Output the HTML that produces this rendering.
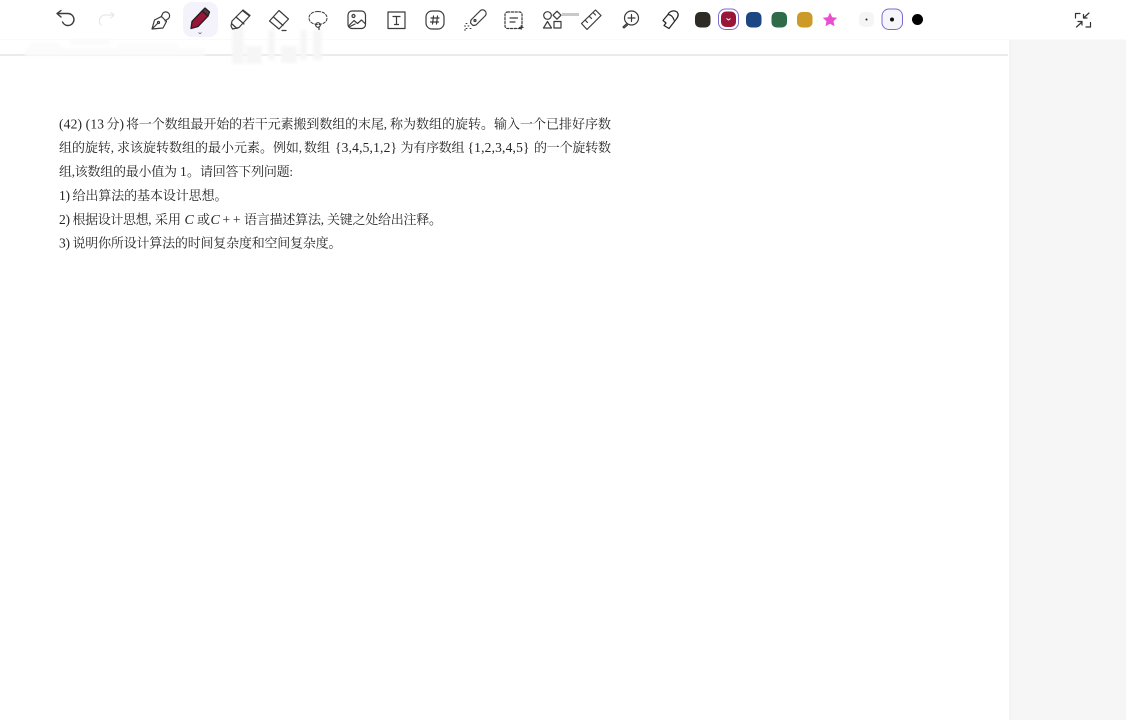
<!DOCTYPE html>
<html lang="zh"><head><meta charset="utf-8"><title>Notes</title>
<style>
html,body{margin:0;padding:0;width:1126px;height:720px;overflow:hidden;background:#fff}
svg{position:absolute;left:0;top:0;display:block}
.l{font-family:'Liberation Serif',serif;font-size:13.5px}
.i{font-family:'Liberation Serif',serif;font-size:14px;font-style:italic}
</style></head><body>
<svg width="1126" height="720" viewBox="0 0 1126 720" xmlns="http://www.w3.org/2000/svg">
<defs>
<filter id="b" x="-5%" y="-5%" width="110%" height="110%"><feGaussianBlur stdDeviation="0.35"/></filter>
<filter id="b2" x="-20%" y="-20%" width="140%" height="140%"><feGaussianBlur stdDeviation="1.5"/></filter>
</defs>
<rect width="1126" height="720" fill="#fff"/>
<rect x="1009" y="40" width="117" height="680" fill="#f6f6f6"/>
<rect x="1009" y="40" width="3" height="680" fill="#f4f4f4"/>
<rect x="0" y="39" width="1126" height="1" fill="#fafafa"/>
<rect x="0" y="54" width="1008" height="2" fill="#ebebeb"/>
<g filter="url(#b2)">
<path d="M25 48h180v8H25z" fill="#fbfbfb"/>
<path d="M30 43h30v4H30zM70 40h40v5H70zM118 44h60v3h-60z" fill="#fafafa"/>
<path d="M232 26h12v38h-12zM246 46h16v18h-16zM268 30h7v30h-7zM281 46h16v17h-16zM300 30h7v30h-7zM313 30h9v30h-9z" fill="#f6f6f6"/>
</g>
<rect x="183" y="2" width="35" height="35" rx="9" fill="#f4f2fb"/>
<g fill="none" stroke="#3a3a3a" stroke-width="1.200" stroke-linecap="round" stroke-linejoin="round" filter="url(#b)">
<path d="M57 13.500l4-3M57 13.500l4 3.500M57 13.500h11a6 6 0 1 1-5.500 8.500" stroke-width="1.400"/>
<path d="M101 25a6 6 0 0 1 5-10h8M114 15l-3-2.500M114 15l-3 3" stroke="#e8e8e8"/>
<path d="M152 29l2.500-9 7-3.500 5 5-3.500 6.500zM152 29l5.500-5.500"/>
<circle cx="158.500" cy="22.500" r="1"/>
<path d="M161 17l2-4a3.800 3.800 0 0 1 5.500 5.500l-3.500 2.500"/>
<path d="M232 21l11-11 7 5.500-11 12-6.500 1.500-1.500-3z"/>
<path d="M236 17l8 7M232 24l5 4.500M243 11l6.500 5"/>
<path d="M269.500 21l9.500-10.500 9.500 8.500-9.500 10zM273.500 17l9.500 8.500M282 30.500h4"/>
<path d="M318 11.500c5 0 9 2.500 9 6.500s-4 6.500-9 6.500-9-2.500-9-6.500 4-6.500 9-6.500z" stroke-dasharray="2.600 1.600" stroke-width="1"/>
<circle cx="318" cy="25" r="2.300"/><path d="M319 27v2.500"/>
<rect x="348" y="11" width="17.500" height="17.500" rx="4"/>
<circle cx="353.500" cy="16" r="1.500"/><path d="M349 25.500l5-5 3.500 3 4-3.500 3.500 3.500M349 27l6-3"/>
<path d="M388 12h17v16.500h-17zM393 16.500h7M396.500 16.500v8M394.500 24.500h4"/>
<rect x="426" y="11" width="18" height="18" rx="6"/>
<path d="M433.500 16l-1 8M437.500 16l-1 8M431 18h8M430.500 22h8"/>
<path d="M471 20l9.500-9.500a3.600 3.600 0 0 1 5 5L476 25l-3 .5-2.500-2.500z"/>
<circle cx="475" cy="20.500" r="1"/>
<path d="M466 23.500h1M464.500 26h1M468 26h1M466 28.500h1M470 28.500h1M464.500 30h1" stroke-width="1"/>
<rect x="505" y="12" width="17" height="16.500" rx="2.500" stroke-dasharray="2.200 1.600"/>
<path d="M510 18h7.500M510 22h5M519.500 27.500h3.500M521.200 25.800v3.400"/>
<circle cx="547.500" cy="15.500" r="3.800"/><path d="M557 11.200l4 4-4 4-4-4zM543.500 28l4-6.500 4 6.500zM554 21.500h7v6.500h-7z"/>
<path d="M562 14.500h17" stroke="#c9c9c9" stroke-width="3" stroke-linecap="butt"/>
<path d="M581.500 23.500l14-13.500 5.500 5.500-14 14zM585.500 20.500l2 2M589.500 16.500l2 2M593.500 13l2 2"/>
<circle cx="631.500" cy="18" r="7"/><path d="M627 23.500l-4 3.500.9 1 3.600-3M631.500 14.500v7M628 18h7"/>
<path d="M668 14.500c1-3 6-5 9-2.500 2 2 1 5-1 7.500l-7 9-5-3 2-2.500-3-2.500zM668 14.500c2.500 0 5 2 6 5.500" stroke="#222"/>
</g>
<g filter="url(#b)">
<rect x="695" y="12" width="15.500" height="15.500" rx="5" fill="#2f2a27"/>
<rect x="718.500" y="9" width="20" height="20.500" rx="7" fill="#fff" stroke="#7b6bd3" stroke-width="1"/>
<rect x="721" y="11.500" width="15" height="15.500" rx="5" fill="#9a1237"/>
<path d="M726.500 18.500l2 1.500 2-1.500" fill="none" stroke="#fff" stroke-width="1"/>
<rect x="746" y="12" width="15.500" height="15.500" rx="5" fill="#1f4682"/>
<rect x="771.500" y="12" width="15.500" height="15.500" rx="5" fill="#2f6c49"/>
<rect x="797" y="12" width="15.500" height="15.500" rx="5" fill="#cc9a28"/>
<path d="M830 12.500l2.200 4.700 5 .6-3.700 3.400 1 5-4.500-2.500-4.500 2.500 1-5-3.700-3.400 5-.6z" fill="#ea4ed2"/>
<rect x="859" y="12" width="15" height="15" rx="5" fill="#f5f5f5"/>
<circle cx="866.500" cy="19.500" r="1" fill="#222"/>
<rect x="882" y="9" width="20.500" height="20.500" rx="7" fill="#f6f6fa" stroke="#7b6bd3" stroke-width="1"/>
<circle cx="892" cy="19.500" r="2" fill="#111"/>
<circle cx="917.500" cy="19.500" r="5.500" fill="#000"/>
</g>
<g fill="none" stroke="#333" stroke-width="1.200" stroke-linecap="round" stroke-linejoin="round" filter="url(#b)">
<path d="M1075.500 18v-4.500h4.500M1090.500 22.500v4.500h-4.500M1089 13l-5.500 5M1083.500 14.500v3.500h3.500M1076.500 27l5.500-5M1078 21.500h4v3.500"/>
</g>
<g font-family="'Liberation Serif','Noto Serif CJK SC',serif" font-size="13" fill="#262626" filter="url(#b)">
<text class="l" x="59" y="128.500" textLength="45" lengthAdjust="spacing">(42) (13</text>
<text x="106.500" y="128.500">分</text>
<text class="l" x="119.500" y="128.500">)</text>
<text x="126" y="128.500" textLength="261" lengthAdjust="spacing">将一个数组最开始的若干元素搬到数组的末尾,</text>
<text x="390" y="128.500" textLength="221" lengthAdjust="spacing">称为数组的旋转。输入一个已排好序数</text>

<text x="59" y="152" textLength="55" lengthAdjust="spacing">组的旋转,</text>
<text x="117" y="152" textLength="156" lengthAdjust="spacing">求该旋转数组的最小元素。</text>
<text x="273" y="152" textLength="29" lengthAdjust="spacing">例如,</text>
<text x="304" y="152" textLength="26" lengthAdjust="spacing">数组</text>
<text class="l" x="335" y="152" textLength="62" lengthAdjust="spacing">{3,4,5,1,2}</text>
<text x="400.500" y="152" textLength="64" lengthAdjust="spacing">为有序数组</text>
<text class="l" x="467.500" y="152" textLength="62" lengthAdjust="spacing">{1,2,3,4,5}</text>
<text x="534" y="152" textLength="77" lengthAdjust="spacing">的一个旋转数</text>

<text x="59" y="176" textLength="118" lengthAdjust="spacing">组,该数组的最小值为</text>
<text class="l" x="180" y="176">1</text>
<text x="187" y="176">。</text>
<text x="200" y="176" textLength="93" lengthAdjust="spacing">请回答下列问题:</text>

<text class="l" x="59" y="200" textLength="11" lengthAdjust="spacing">1)</text>
<text x="72.500" y="200" textLength="155" lengthAdjust="spacing">给出算法的基本设计思想。</text>

<text class="l" x="59" y="224" textLength="11" lengthAdjust="spacing">2)</text>
<text x="72.500" y="224" textLength="79" lengthAdjust="spacing">根据设计思想,</text>
<text x="155" y="224" textLength="26" lengthAdjust="spacing">采用</text>
<text class="i" x="184.500" y="224">C</text>
<text x="197" y="224">或</text>
<text class="i" x="210.500" y="224">C</text>
<text class="l" x="222.500" y="224" textLength="18" lengthAdjust="spacing">++</text>
<text x="244" y="224" textLength="80" lengthAdjust="spacing">语言描述算法,</text>
<text x="327" y="224" textLength="115" lengthAdjust="spacing">关键之处给出注释。</text>

<text class="l" x="59" y="247.500" textLength="11" lengthAdjust="spacing">3)</text>
<text x="72.500" y="247.500" textLength="269" lengthAdjust="spacing">说明你所设计算法的时间复杂度和空间复杂度。</text>
</g>
<g filter="url(#b)">
<path d="M191 28.500l1-7 10-10.500 6 5-10 10.500z" fill="#9a1237" stroke="#222" stroke-width="1.300" stroke-linejoin="round"/>
<path d="M202 11l3-3 4.500 4-1.500 4z" fill="#5d3440" stroke="#222" stroke-width="1.300" stroke-linejoin="round"/>
<path d="M198.500 32.500l1.500 1.200 1.500-1.200" fill="none" stroke="#666" stroke-width="0.800"/>
</g>
</svg>
</body></html>
